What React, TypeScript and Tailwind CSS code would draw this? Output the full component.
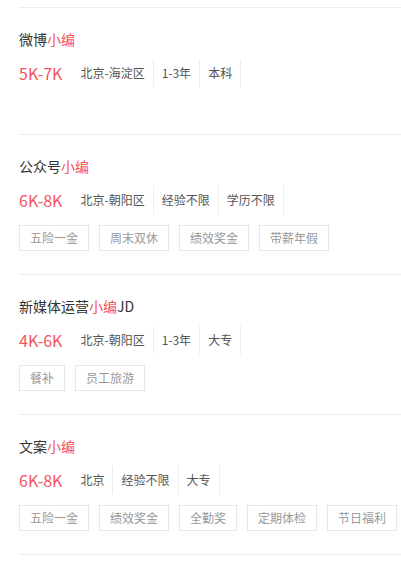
import React from "react";

type Job = {
  pre: string;
  red: string;
  post?: string;
  salary: string;
  info: string[];
  tags: string[];
};

const jobs: Job[] = [
  { pre: "微博", red: "小编", salary: "5K-7K", info: ["北京-海淀区", "1-3年", "本科"], tags: [] },
  {
    pre: "公众号",
    red: "小编",
    salary: "6K-8K",
    info: ["北京-朝阳区", "经验不限", "学历不限"],
    tags: ["五险一金", "周末双休", "绩效奖金", "带薪年假"],
  },
  {
    pre: "新媒体运营",
    red: "小编",
    post: "JD",
    salary: "4K-6K",
    info: ["北京-朝阳区", "1-3年", "大专"],
    tags: ["餐补", "员工旅游"],
  },
  {
    pre: "文案",
    red: "小编",
    salary: "6K-8K",
    info: ["北京", "经验不限", "大专"],
    tags: ["五险一金", "绩效奖金", "全勤奖", "定期体检", "节日福利"],
  },
];

export default function App() {
  return (
    <div
      className="w-[401px] h-[565px] bg-white overflow-hidden pt-[7px] pl-[19px]"
      style={{ fontFamily: '"Noto Sans CJK SC", "Noto Sans", sans-serif' }}
    >
      <div className="border-b border-[#ededed]">
        {jobs.map((j, i) => (
          <div key={i} className="border-t border-[#ededed] pt-[21px] pb-[23px]">
            <div className="text-[14px] leading-[20px] text-[#333]">
              {j.pre}
              <span className="text-[#f2545b]">{j.red}</span>
              {j.post}
            </div>
            <div className="flex items-center h-[28px] mt-[10px]">
              <span className="text-[16px] leading-[28px] text-[#f2545b] mr-[10px]">{j.salary}</span>
              {j.info.map((s, k) => (
                <span
                  key={k}
                  className="text-[12px] leading-[28px] h-[28px] px-[8px] text-[#555] border-r border-[#ededed]"
                >
                  {s}
                </span>
              ))}
            </div>
            {j.tags.length > 0 ? (
              <div className="flex gap-[10px] mt-[11px]">
                {j.tags.map((t, k) => (
                  <span
                    key={k}
                    className="h-[26px] leading-[24px] px-[10px] border border-[#e6e6e6] text-[12px] text-[#999]"
                  >
                    {t}
                  </span>
                ))}
              </div>
            ) : (
              <div className="h-[24px]" />
            )}
          </div>
        ))}
      </div>
    </div>
  );
}
